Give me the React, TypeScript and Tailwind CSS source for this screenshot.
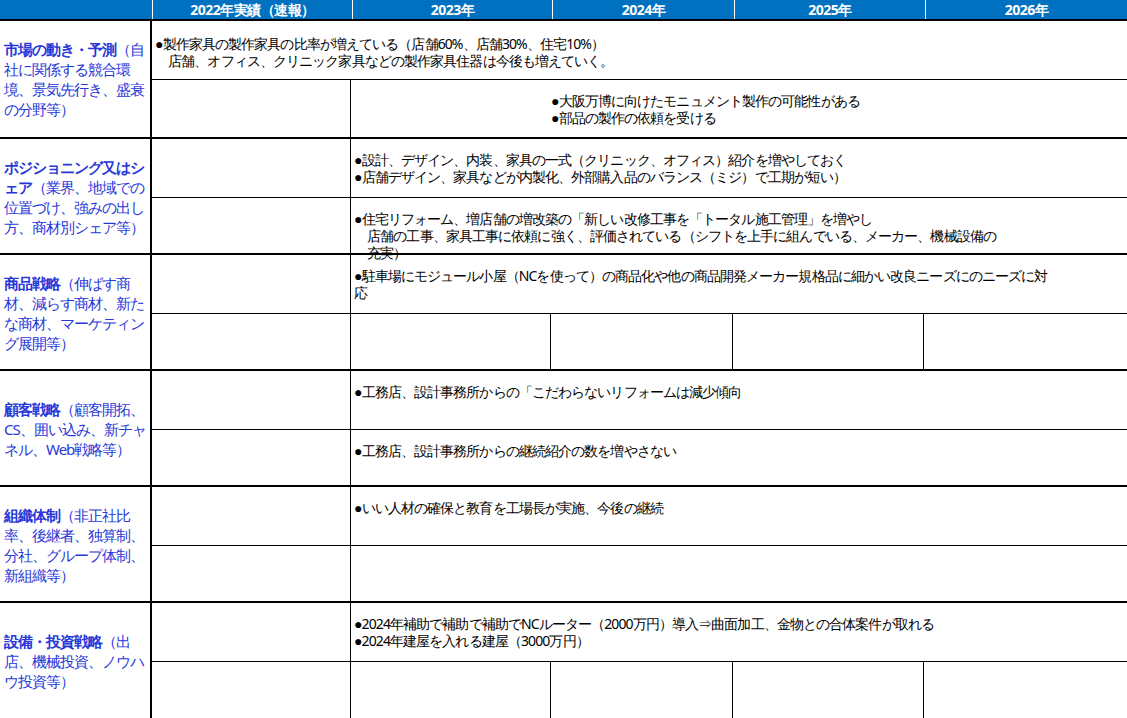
import React from 'react';

const COLS = 'grid grid-cols-[152px_200px_200px_182px_191px_1fr]';
const YEARS = ['2022年実績（速報）', '2023年', '2024年', '2025年', '2026年'];

type Sub = { merged: boolean; lines: string[]; indent?: boolean };
type Section = { title: string; note: string; rows: [Sub, Sub] };

const SECTIONS: Section[] = [
  {
    title: '市場の動き・予測',
    note: '（自社に関係する競合環境、景気先行き、盛衰の分野等）',
    rows: [
      { merged: true, lines: ['●製作家具の製作家具の比率が増えている（店舗60%、店舗30%、住宅10%）', '　店舗、オフィス、クリニック家具などの製作家具住器は今後も増えていく。'] },
      { merged: false, indent: true, lines: ['●大阪万博に向けたモニュメント製作の可能性がある', '●部品の製作の依頼を受ける'] },
    ],
  },
  {
    title: 'ポジショニング又はシェア',
    note: '（業界、地域での位置づけ、強みの出し方、商材別シェア等）',
    rows: [
      { merged: false, lines: ['●設計、デザイン、内装、家具の一式（クリニック、オフィス）紹介を増やしておく', '●店舗デザイン、家具などが内製化、外部購入品のバランス（ミジ）で工期が短い）'] },
      { merged: false, lines: ['●住宅リフォーム、増店舗の増改築の「新しい改修工事を「トータル施工管理」を増やし', '　店舗の工事、家具工事に依頼に強く、評価されている（シフトを上手に組んでいる、メーカー、機械設備の', '　充実）'] },
    ],
  },
  {
    title: '商品戦略',
    note: '（伸ばす商材、減らす商材、新たな商材、マーケティング展開等）',
    rows: [
      { merged: false, lines: ['●駐車場にモジュール小屋（NCを使って）の商品化や他の商品開発メーカー規格品に細かい改良ニーズにのニーズに対', '応'] },
      { merged: false, lines: [] },
    ],
  },
  {
    title: '顧客戦略',
    note: '（顧客開拓、CS、囲い込み、新チャネル、Web戦略等）',
    rows: [
      { merged: false, lines: ['●工務店、設計事務所からの「こだわらないリフォームは減少傾向'] },
      { merged: false, lines: ['●工務店、設計事務所からの継続紹介の数を増やさない'] },
    ],
  },
  {
    title: '組織体制',
    note: '（非正社比率、後継者、独算制、分社、グループ体制、新組織等）',
    rows: [
      { merged: false, lines: ['●いい人材の確保と教育を工場長が実施、今後の継続'] },
      { merged: false, lines: [] },
    ],
  },
  {
    title: '設備・投資戦略',
    note: '（出店、機械投資、ノウハウ投資等）',
    rows: [
      { merged: false, lines: ['●2024年補助で補助で補助でNCルーター（2000万円）導入⇒曲面加工、金物との合体案件が取れる', '●2024年建屋を入れる建屋（3000万円）'] },
      { merged: false, lines: [] },
    ],
  },
];

// 分割セル有無
const SPLIT = [[false, false], [false, false], [false, true], [false, false], [false, false], [false, true]];

const TEXT = 'text-[14px] leading-[17px] tracking-[-0.9px] text-black';

function SubRow({ sub, splitCols, first }: { sub: Sub; splitCols: boolean; first: boolean }) {
  const top = first ? '' : 'border-t border-black';
  if (sub.merged) {
    return (
      <div className={`col-span-5 ${top} px-[3px] pt-[14px] ${TEXT}`}>
        {sub.lines.map((l, i) => <div key={i} className="whitespace-nowrap">{l}</div>)}
      </div>
    );
  }
  return (
    <>
      <div className={`${top}`} />
      {splitCols ? (
        <>
          <div className={`${top} border-l border-black`} />
          <div className={`${top} border-l border-black`} />
          <div className={`${top} border-l border-black`} />
          <div className={`${top} border-l border-black`} />
        </>
      ) : (
        <div className={`col-span-4 ${top} border-l border-black px-[3px] ${sub.indent ? 'pl-[200px]' : ''} pt-[12px] ${TEXT}`}>
          {sub.lines.map((l, i) => <div key={i} className="whitespace-nowrap">{l}</div>)}
        </div>
      )}
    </>
  );
}

export default function App(): React.JSX.Element {
  return (
    <div className="h-[718px] w-[1127px] overflow-hidden bg-white font-['Noto_Sans_CJK_JP',sans-serif]">
      <div className={`${COLS} h-[21px] border-b-2 border-black bg-[#0070c0] text-[14px] font-bold tracking-[-0.5px] text-white`}>
        <div />
        {YEARS.map((y) => (
          <div key={y} className="flex items-center justify-center border-l border-white leading-none">{y}</div>
        ))}
      </div>
      {SECTIONS.map((s, si) => (
        <div key={s.title} className={`${COLS} h-[116px] ${si > 0 ? 'border-t-2 border-black' : ''}`}>
          <div className="row-span-2 flex items-center border-r-2 border-black pl-[4px] pr-[2px] text-[15px] leading-[20px] tracking-[-1px] text-[#2837d8]">
            <p>
              <b>{s.title}</b>
              {s.note}
            </p>
          </div>
          <div className="col-span-5 grid grid-cols-[198px_200px_182px_191px_1fr] grid-rows-[58px_58px]">
            {s.rows.map((r, ri) => (
              <SubRow key={ri} sub={r} first={ri === 0} splitCols={SPLIT[si][ri]} />
            ))}
          </div>
        </div>
      ))}
    </div>
  );
}
